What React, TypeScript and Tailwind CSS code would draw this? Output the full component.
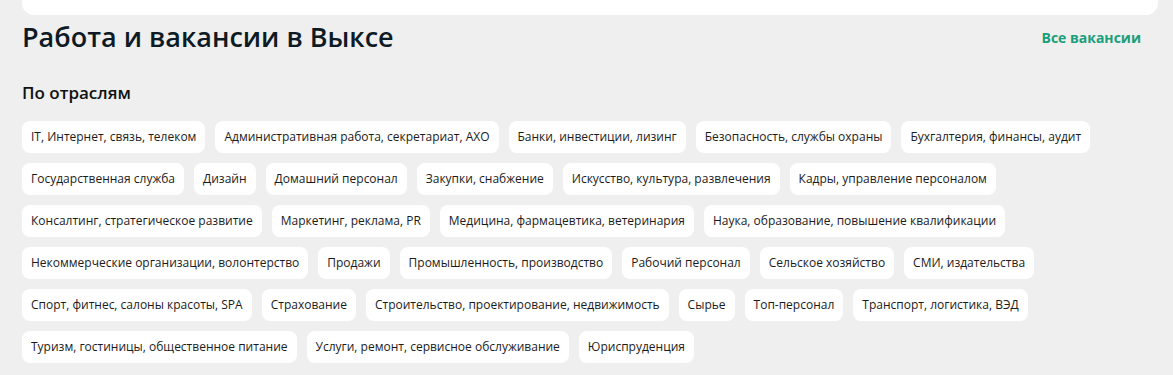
const industries = [
  "IT, Интернет, связь, телеком",
  "Административная работа, секретариат, АХО",
  "Банки, инвестиции, лизинг",
  "Безопасность, службы охраны",
  "Бухгалтерия, финансы, аудит",
  "Государственная служба",
  "Дизайн",
  "Домашний персонал",
  "Закупки, снабжение",
  "Искусство, культура, развлечения",
  "Кадры, управление персоналом",
  "Консалтинг, стратегическое развитие",
  "Маркетинг, реклама, PR",
  "Медицина, фармацевтика, ветеринария",
  "Наука, образование, повышение квалификации",
  "Некоммерческие организации, волонтерство",
  "Продажи",
  "Промышленность, производство",
  "Рабочий персонал",
  "Сельское хозяйство",
  "СМИ, издательства",
  "Спорт, фитнес, салоны красоты, SPA",
  "Страхование",
  "Строительство, проектирование, недвижимость",
  "Сырье",
  "Топ-персонал",
  "Транспорт, логистика, ВЭД",
  "Туризм, гостиницы, общественное питание",
  "Услуги, ремонт, сервисное обслуживание",
  "Юриспруденция",
];

const Chip = ({ label }: { label: string }) => (
  <a
    href="#"
    className="flex h-8 items-center rounded-lg bg-white px-[9px] text-[12px] text-[#1b1b1b] hover:bg-gray-50"
  >
    {label}
  </a>
);

export default function App() {
  return (
    <div
      className="min-h-[375px] bg-[#eeefee] pl-[22px] pr-[15px]"
      style={{ fontFamily: '"Open Sans", "Noto Sans", sans-serif' }}
    >
      <div className="h-[15px] rounded-b-xl bg-white" />
      <div className="mt-[4px] flex items-center justify-between pr-[17px]">
        <h1 className="text-[27px] leading-[36px] font-semibold text-[#0e1a24]">
          Работа и вакансии в Выксе
        </h1>
        <a href="#" className="text-[14px] font-bold text-[#1b9e7b]">
          Все вакансии
        </a>
      </div>
      <h2 className="mt-[26px] text-[17px] leading-6 font-semibold text-[#111]">
        По отраслям
      </h2>
      <div className="mt-[16px] flex flex-wrap gap-[10px]">
        {industries.map((name) => (
          <Chip key={name} label={name} />
        ))}
      </div>
    </div>
  );
}
